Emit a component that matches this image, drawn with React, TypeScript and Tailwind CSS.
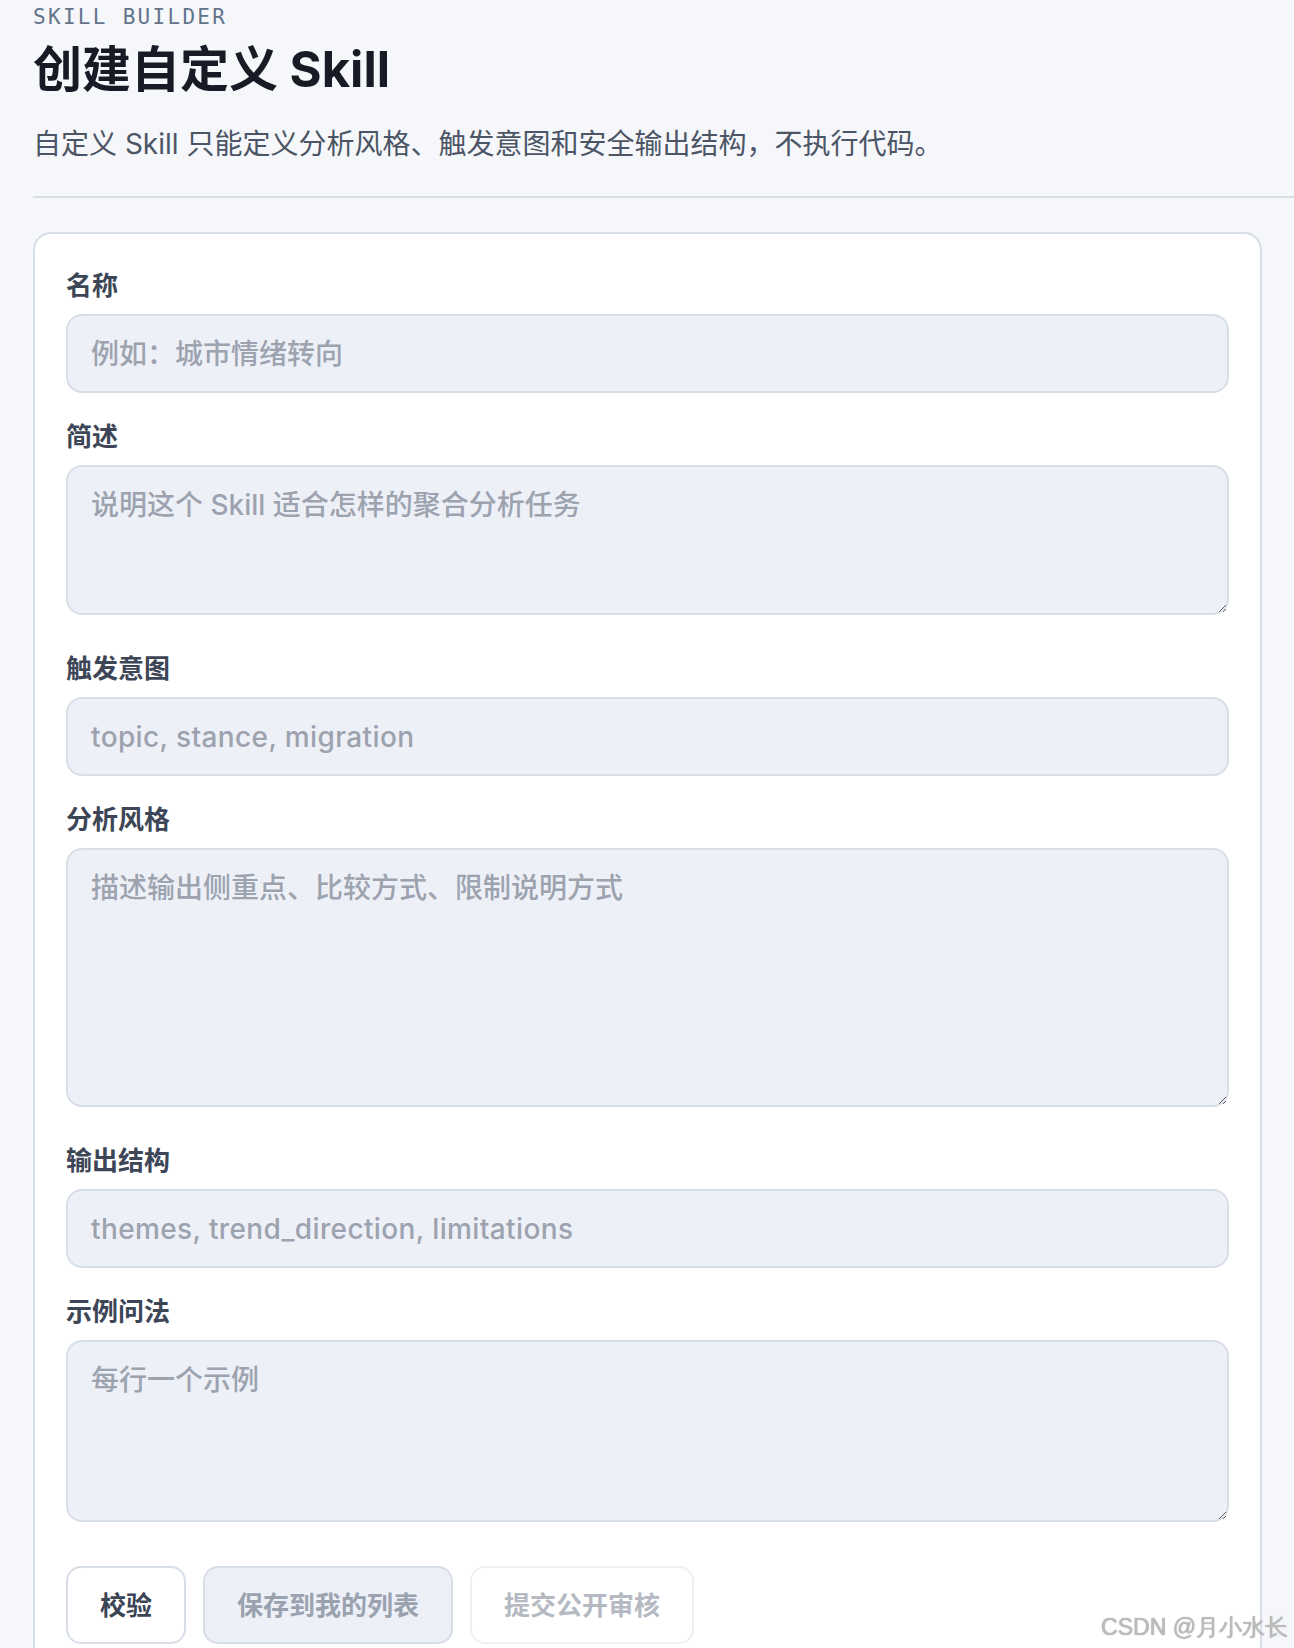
import React from "react";

const fieldBase =
  "box-border w-full rounded-[16px] border-2 border-[#d8dee8] bg-[#edf0f7] px-[23px] text-[28px] font-medium text-[#1f2937] outline-none placeholder:text-[#9ca3af]";

function Label({ children }: { children: React.ReactNode }) {
  return (
    <label className="block h-[36px] text-[26px] font-semibold leading-[36px] text-[#3d4656]">
      {children}
    </label>
  );
}

function TextField({ label, placeholder, latin }: { label: string; placeholder: string; latin?: boolean }) {
  return (
    <div className="flex flex-col gap-[10px]">
      <Label>{label}</Label>
      <input
        type="text"
        placeholder={placeholder}
        className={`${fieldBase} block h-[79px] leading-[37px] ${latin ? "tracking-[0.38px]" : ""}`}
      />
    </div>
  );
}

function AreaField({ label, placeholder, height }: { label: string; placeholder: string; height: string }) {
  return (
    <div className="flex flex-col gap-[10px] pb-[10px]">
      <Label>{label}</Label>
      <textarea
        placeholder={placeholder}
        className={`${fieldBase} block py-[20px] leading-[37px] ${height}`}
      />
    </div>
  );
}

export default function App() {
  return (
    <div className="relative h-[1648px] overflow-hidden bg-[#f6f7fb] font-[Inter,'Noto_Sans_CJK_SC',sans-serif]">
      {/* Header */}
      <div className="ml-[33px] border-b-2 border-[#d8dee8] pb-[32px] pt-[3px]">
        <p className="font-['DejaVu_Sans_Mono',monospace] text-[21px] leading-[28px] tracking-[2.3px] text-[#64748b]">
          SKILL BUILDER
        </p>
        <h1 className="mt-[8px] text-[49px] font-bold leading-[62px] text-[#161b26]">创建自定义 Skill</h1>
        <p className="mt-[23px] text-[28px] leading-[40px] text-[#4b5565]">
          自定义 Skill 只能定义分析风格、触发意图和安全输出结构，不执行代码。
        </p>
      </div>

      {/* Form card */}
      <div className="ml-[33px] mr-[32px] mt-[34px] flex flex-col gap-[26px] rounded-[18px] border-2 border-[#d8dee8] bg-white px-[31px] pb-[33px] pt-[34px]">
        <TextField label="名称" placeholder="例如：城市情绪转向" />
        <AreaField label="简述" placeholder="说明这个 Skill 适合怎样的聚合分析任务" height="h-[150px]" />
        <TextField latin label="触发意图" placeholder="topic, stance, migration" />
        <AreaField label="分析风格" placeholder="描述输出侧重点、比较方式、限制说明方式" height="h-[259px]" />
        <TextField latin label="输出结构" placeholder="themes, trend_direction, limitations" />
        <AreaField label="示例问法" placeholder="每行一个示例" height="h-[182px]" />

        <div className="mt-[8px] flex gap-[17px]">
          <button className="h-[78px] rounded-[15px] border-2 border-[#d8dee8] bg-white px-[32px] text-[26px] font-bold text-[#3b4455]">
            校验
          </button>
          <button className="h-[78px] rounded-[15px] border-2 border-[#d8dee8] bg-[#edf0f7] px-[32px] text-[26px] font-bold text-[#9aa2b0]">
            保存到我的列表
          </button>
          <button className="h-[78px] rounded-[15px] border-2 border-[#eceff4] bg-white px-[32px] text-[26px] font-bold text-[#b4b9c2]">
            提交公开审核
          </button>
        </div>
      </div>

      {/* Watermark */}
      <div className="absolute bottom-[6px] right-[6px] font-['Liberation_Sans',sans-serif] text-[23px] leading-[30px] text-[#bdbdbd] [text-shadow:0_0_1px_#888]">
        CSDN @月小水长
      </div>
    </div>
  );
}
